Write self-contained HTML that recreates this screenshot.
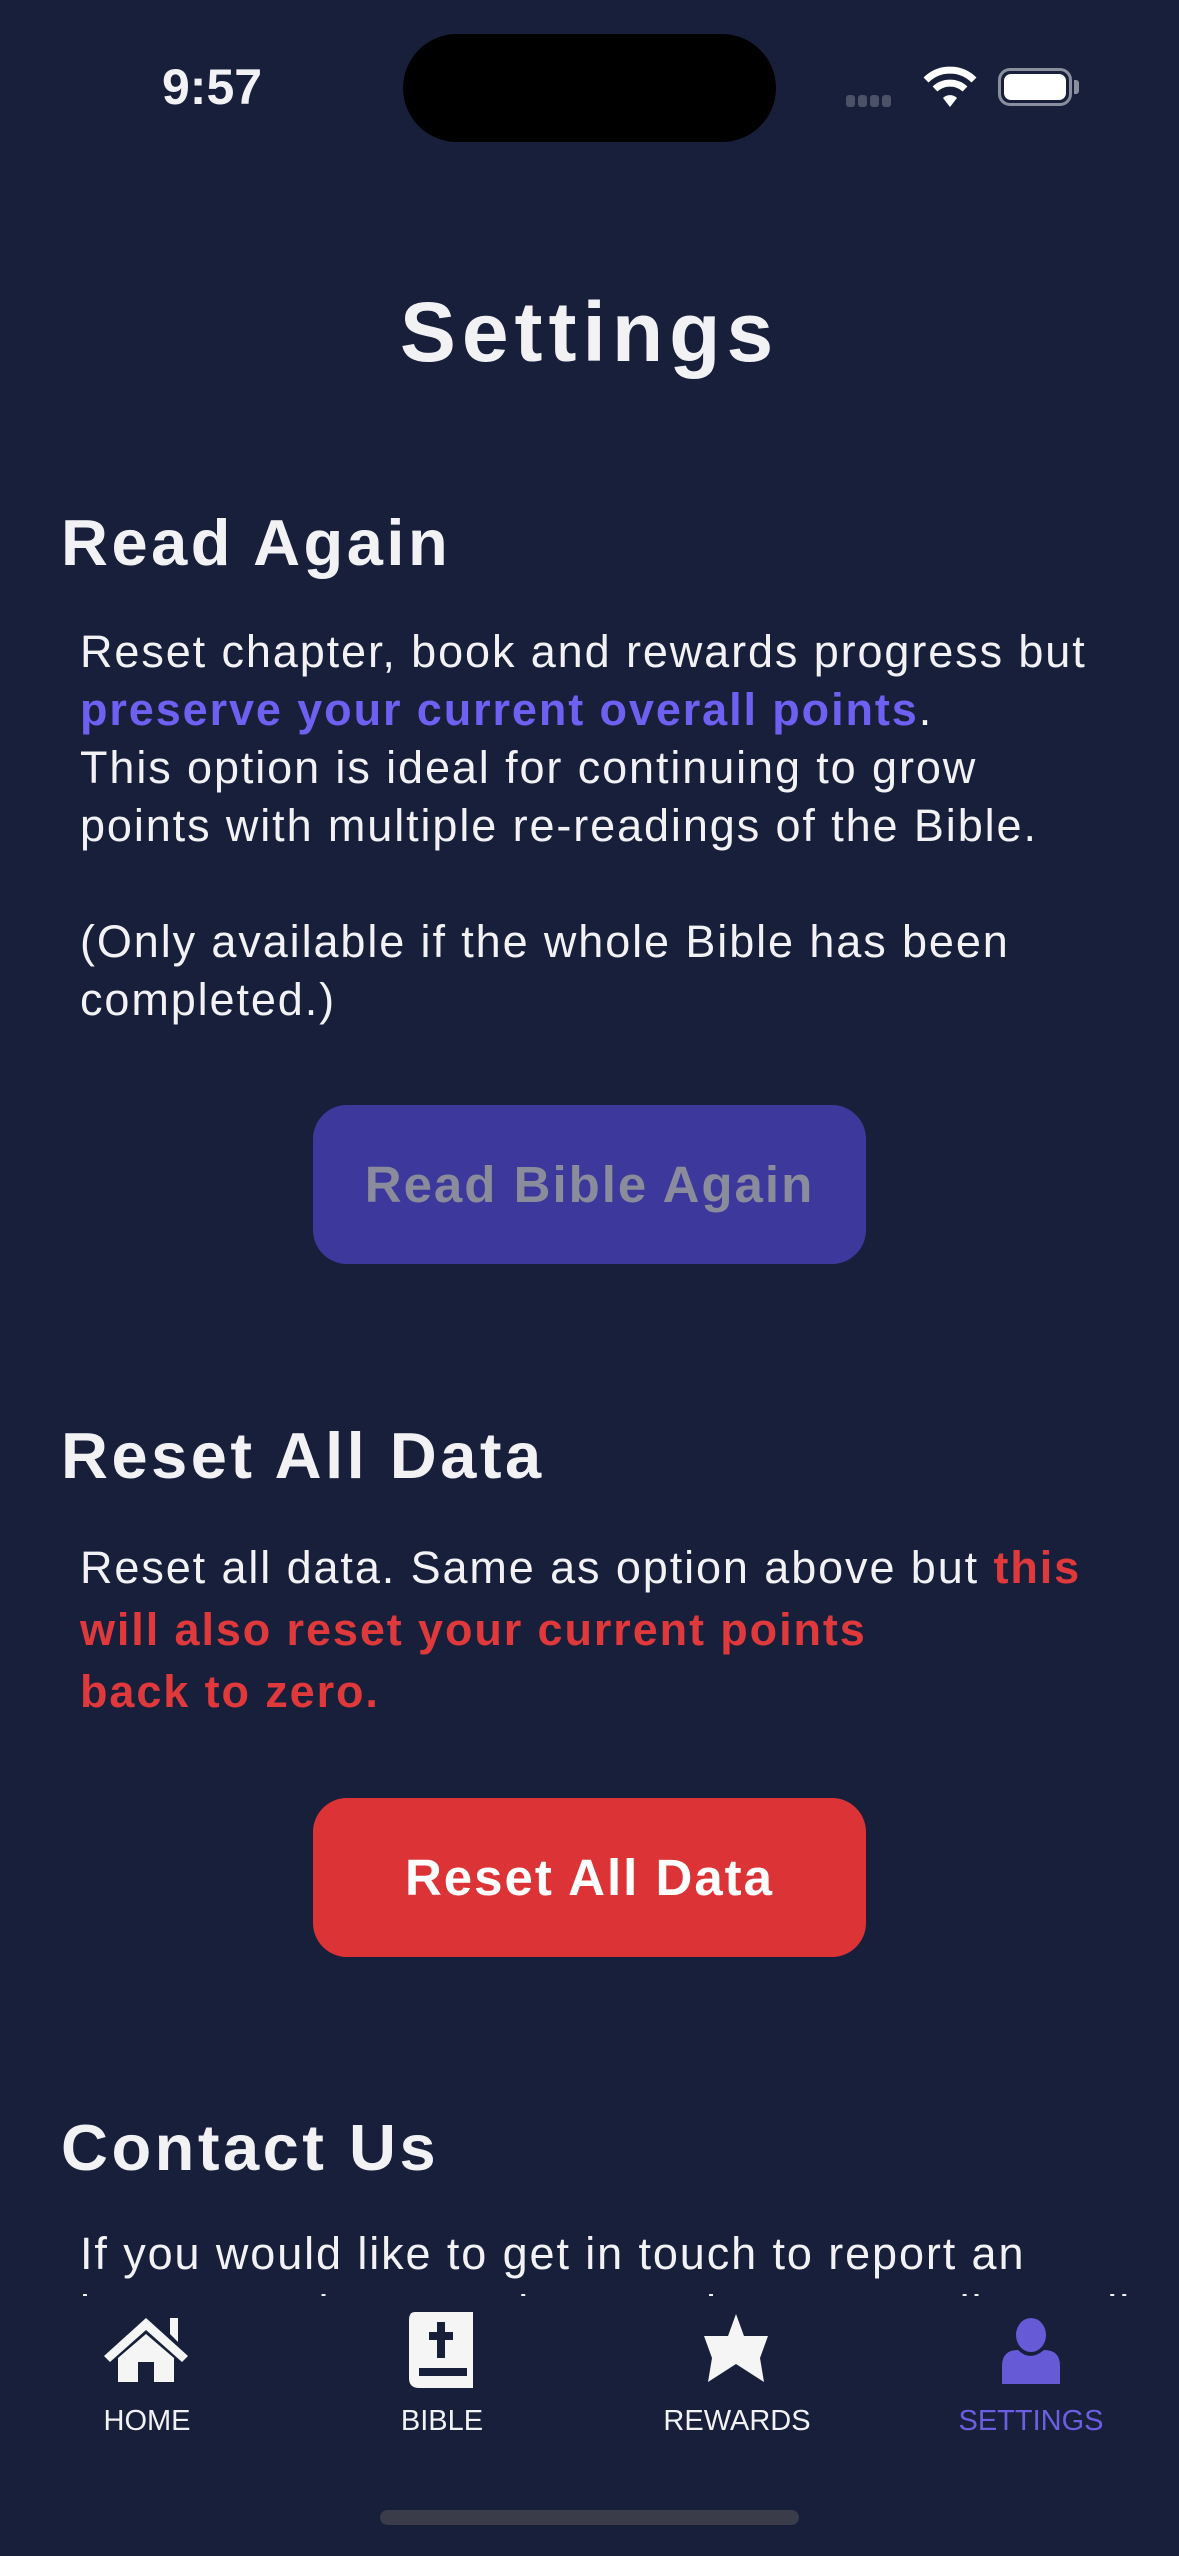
<!DOCTYPE html>
<html><head><meta charset="utf-8"><style>
html,body{margin:0;padding:0;}
body{width:1179px;height:2556px;background:#181f3b;position:relative;overflow:hidden;font-family:"Liberation Sans",sans-serif;color:#f2f2f5;}
.a{position:absolute;white-space:nowrap;}
.h{font-weight:bold;font-size:65px;left:61px;letter-spacing:3.5px;}
.p{font-size:45px;left:80px;line-height:58px;letter-spacing:1.9px;}
.btn{position:absolute;left:313px;width:553px;height:159px;border-radius:34px;display:flex;align-items:center;justify-content:center;font-weight:bold;font-size:51px;letter-spacing:2px;}
.tab{position:absolute;top:2405px;width:200px;text-align:center;font-size:29px;}
</style></head><body>
<div class="a" style="left:162px;top:58px;font-size:50px;font-weight:bold;">9:57</div>
<div class="a" style="left:403px;top:34px;width:373px;height:108px;background:#000;border-radius:54px;"></div>
<div class="a" style="left:846px;top:94px;">
 <span style="display:inline-block;width:9px;height:12px;background:#4b5166;border-radius:3px;margin-right:3px"></span><span style="display:inline-block;width:9px;height:12px;background:#4b5166;border-radius:3px;margin-right:3px"></span><span style="display:inline-block;width:9px;height:12px;background:#4b5166;border-radius:3px;margin-right:3px"></span><span style="display:inline-block;width:9px;height:12px;background:#4b5166;border-radius:3px"></span></div>
<svg class="a" style="left:923px;top:66px" width="54" height="42" viewBox="0 0 54 42"><path d="M3 14 A34 34 0 0 1 51 14" stroke="#fff" stroke-width="7" fill="none"/><path d="M12 23 A22 22 0 0 1 42 23" stroke="#fff" stroke-width="7" fill="none"/><path d="M20 32 L27 41 L34 32 A10 10 0 0 0 20 32Z" fill="#fff"/></svg>
<div class="a" style="left:998px;top:68px;width:74px;height:38px;border:3px solid #8a8f9e;border-radius:12px;box-sizing:border-box;"></div>
<div class="a" style="left:1004px;top:74px;width:62px;height:26px;background:#fff;border-radius:7px;"></div>
<div class="a" style="left:1074px;top:80px;width:5px;height:14px;background:#8a8f9e;border-radius:0 3px 3px 0;"></div>

<div class="a" style="left:0;width:1179px;text-align:center;top:284px;font-size:84px;font-weight:bold;letter-spacing:6px;">Settings</div>

<div class="a h" style="top:505px;">Read Again</div>
<div class="a p" style="top:623px;">Reset chapter, book and rewards progress but<br><b style="color:#6e60f0">preserve your current overall points</b>.<br>This option is ideal for continuing to grow<br>points with multiple re-readings of the Bible.<br><br>(Only available if the whole Bible has been<br>completed.)</div>
<div class="btn" style="top:1105px;background:#3d389c;color:#8a8b9b;">Read Bible Again</div>

<div class="a h" style="top:1418px;">Reset All Data</div>
<div class="a p" style="top:1537px;line-height:62px;">Reset all data. Same as option above but <b style="color:#e0393b">this</b><br><b style="color:#e0393b">will also reset your current points</b><br><b style="color:#e0393b">back to zero.</b></div>
<div class="btn" style="top:1798px;background:#dc3436;color:#fff;">Reset All Data</div>

<div class="a h" style="top:2110px;">Contact Us</div>
<div class="a" style="left:0;top:2200px;width:1179px;height:96px;overflow:hidden;">
<div class="a p" style="top:25px;">If you would like to get in touch to report an<br>issue or ask a question, send us an email or call</div></div>

<svg class="a" style="left:102px;top:2314px" width="88" height="70" viewBox="0 0 44 35"><path d="M1 21 L22 2 L43 21 L40 24 L22 8 L4 24Z" fill="#f5f5f5"/><path d="M34 2 L38 2 L38 14 L34 10Z" fill="#f5f5f5"/><path d="M8 22 L22 10 L36 22 L36 34 L26 34 L26 24 L18 24 L18 34 L8 34Z" fill="#f5f5f5"/></svg>
<svg class="a" style="left:407px;top:2312px" width="68" height="76" viewBox="0 0 34 38"><path d="M4 0 L33 0 L33 38 L6 38 Q1 38 1 33 L1 4 Q1 0 4 0Z" fill="#f5f5f5"/><rect x="6" y="28" width="24" height="4" fill="#181f3b"/><rect x="15" y="5" width="4" height="18" fill="#181f3b"/><rect x="11" y="10" width="12" height="4" fill="#181f3b"/></svg>
<svg class="a" style="left:698px;top:2314px" width="76" height="68" viewBox="0 0 38 34"><path d="M19 0 L23 11 L35 11 L31 22 L33 34 L19 25 L5 34 L7 22 L3 11 L15 11Z" fill="#f5f5f5"/></svg>
<svg class="a" style="left:1000px;top:2318px" width="62" height="66" viewBox="0 0 31 33"><ellipse cx="15.5" cy="8.5" rx="7.5" ry="8.5" fill="#665ad6"/><path d="M1 33 L1 24 Q1 16 9 16 Q15 22 22 16 Q30 16 30 24 L30 33Z" fill="#665ad6"/></svg>
<div class="tab" style="left:47px;color:#f2f2f5">HOME</div>
<div class="tab" style="left:342px;color:#f2f2f5">BIBLE</div>
<div class="tab" style="left:637px;color:#f2f2f5">REWARDS</div>
<div class="tab" style="left:931px;color:#6a5fe0">SETTINGS</div>
<div class="a" style="left:380px;top:2510px;width:419px;height:15px;background:#3a3c4a;border-radius:8px;"></div>
</body></html>
